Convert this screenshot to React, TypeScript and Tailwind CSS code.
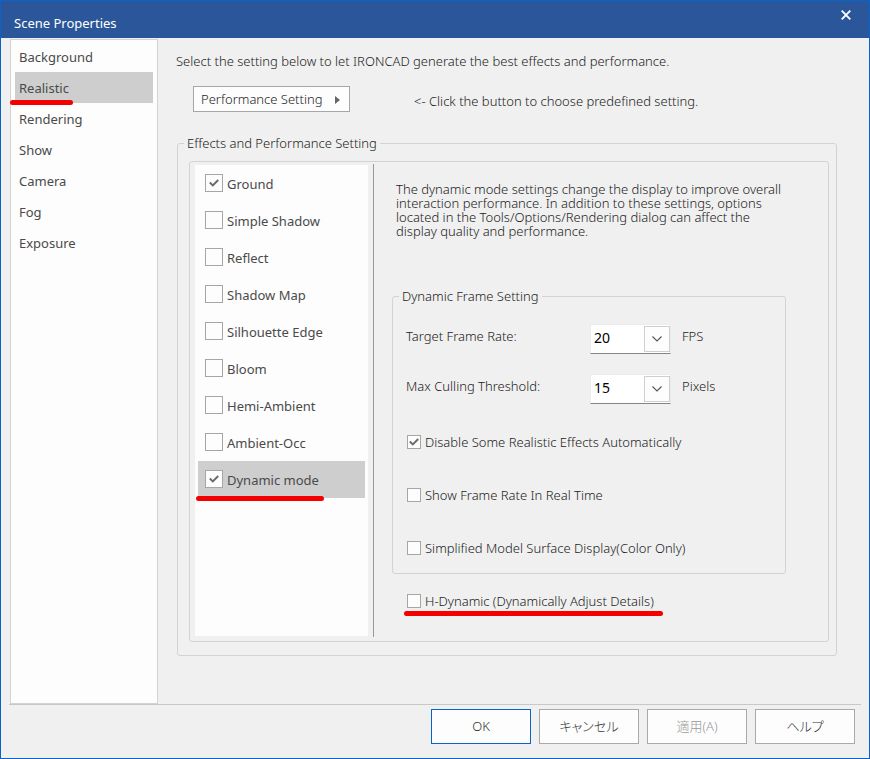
import { useId, useState } from "react";
import type { ReactNode } from "react";

const PAGES = ["Background", "Realistic", "Rendering", "Show", "Camera", "Fog", "Exposure"];

const EFFECTS = [
  { name: "Ground", on: true },
  { name: "Simple Shadow", on: false },
  { name: "Reflect", on: false },
  { name: "Shadow Map", on: false },
  { name: "Silhouette Edge", on: false },
  { name: "Bloom", on: false },
  { name: "Hemi-Ambient", on: false },
  { name: "Ambient-Occ", on: false },
  { name: "Dynamic mode", on: true },
];

function Underline({ className }: { className: string }) {
  return <span aria-hidden="true" className={`pointer-events-none absolute h-[5px] rounded-full bg-[#f50000] ${className}`} />;
}

function Check({ label, initial = false, large = false }: { label: string; initial?: boolean; large?: boolean }) {
  const id = useId();
  const [on, setOn] = useState(initial);
  return (
    <div className={large ? "flex items-center gap-1" : "flex h-5 items-center gap-1"}>
      <span className={`grid shrink-0 place-items-center ${large ? "pb-[2px]" : ""}`}>
        <input
          id={id}
          type="checkbox"
          checked={on}
          onChange={(e) => setOn(e.target.checked)}
          className={`col-start-1 row-start-1 appearance-none border border-[#a6a6a6] bg-[#fdfdfd] ${large ? "size-[18px]" : "size-[14px]"}`}
        />
        {on && (
          <svg viewBox="0 0 10 8" className="pointer-events-none col-start-1 row-start-1 h-2 w-[10px]" fill="none" stroke="#6b6b6b" strokeWidth="2">
            <path d="M0.8 3.6 3.8 6.4 9.2 1" />
          </svg>
        )}
      </span>
      <label htmlFor={id} className="pt-[2px] whitespace-nowrap">
        {label}
      </label>
    </div>
  );
}

function Combo({ label, value, options, unit }: { label: string; value: string; options: string[]; unit: string }) {
  const id = useId();
  return (
    <div className="flex h-[30px] items-center">
      <label htmlFor={id} className="w-[184px] shrink-0 pb-1">
        {label}
      </label>
      <div className="grid w-[81px] shrink-0 items-center">
        <select
          id={id}
          defaultValue={value}
          className="col-start-1 row-start-1 h-[30px] w-full appearance-none border border-[#ececec] border-b-[#858585] bg-white pb-1 pl-[3px] font-[Noto_Sans] text-[14px] font-normal text-black"
        >
          {options.map((o) => (
            <option key={o}>{o}</option>
          ))}
        </select>
        <span className="pointer-events-none col-start-1 row-start-1 mr-px flex h-[26px] w-[26px] items-center justify-center justify-self-end border border-[#cfcfcf] bg-[#fdfdfd]">
          <svg viewBox="0 0 10 6" className="h-[6px] w-[10px]" fill="none" stroke="#555" strokeWidth="1.1">
            <path d="M0.5 0.5 5 5 9.5 0.5" />
          </svg>
        </span>
      </div>
      <span className="pb-1 pl-[11px]">{unit}</span>
    </div>
  );
}

function Group({ title, className, children }: { title: string; className: string; children: ReactNode }) {
  return (
    <fieldset className={`rounded-[3px] border border-[#d3d3d3] ${className}`}>
      <legend className="ml-[6px] h-5 px-[3px] leading-5">{title}</legend>
      {children}
    </fieldset>
  );
}

function DialogButton({ children, primary = false, disabled = false }: { children: ReactNode; primary?: boolean; disabled?: boolean }) {
  const tone = primary
    ? "border-[#0a63c9] text-[#333]"
    : disabled
      ? "border-[#a9a9a9] text-[#999]"
      : "border-[#a9a9a9] text-[#333]";
  return (
    <button
      type="button"
      disabled={disabled}
      className={`h-[35px] w-[100px] border bg-[#fdfdfd] text-[13px] [font-feature-settings:'palt'] ${tone}`}
    >
      {children}
    </button>
  );
}

export default function App() {
  const [page, setPage] = useState("Realistic");
  return (
    <div className="flex min-h-screen w-full flex-col border border-[#0a63c9] bg-[#f0f0f0] font-[Noto_Sans,Noto_Sans_CJK_JP,sans-serif] text-[13px] font-light text-[#1c1c1c]">
      <header className="flex h-[37px] items-start justify-between bg-[#2b579a] pl-[13px] font-normal text-white">
        <h1 className="pt-3 leading-5">Scene Properties</h1>
        <button type="button" aria-label="Close" className="mt-1 mr-[13px] flex size-5 items-center justify-center">
          <svg viewBox="0 0 10 10" className="size-[10px]" fill="none" stroke="#fff" strokeWidth="1.8">
            <path d="M0.7 0.7 9.3 9.3M9.3 0.7 0.7 9.3" />
          </svg>
        </button>
      </header>

      <div className="flex flex-1 pt-px">
        <nav className="ml-[9px] w-[148px] shrink-0 border border-[#d3d3d3] bg-[#fdfdfd] px-1 pt-px font-normal text-[#4a4a4a]">
          <ul>
            {PAGES.map((p) => (
              <li key={p} className="relative">
                <button
                  type="button"
                  onClick={() => setPage(p)}
                  className={`block h-[31px] w-full pt-[2px] pl-1 text-left ${p === page ? "bg-[#cecece]" : ""}`}
                >
                  {p}
                </button>
                {p === "Realistic" && <Underline className="-bottom-[2px] -left-[5px] w-[63px]" />}
              </li>
            ))}
          </ul>
        </nav>

        <main className="flex min-w-0 flex-1 flex-col pt-3 pr-8 pb-12 pl-[19px]">
          <p className="-ml-px leading-5">Select the setting below to let IRONCAD generate the best effects and performance.</p>
          <div className="mt-[15px] flex items-center pl-4">
            <button type="button" className="flex h-[26px] w-[157px] items-center justify-between border border-[#a6a6a6] bg-[#fdfdfd] pt-px pr-[9px] pl-[7px]">
              Performance Setting
              <svg viewBox="0 0 5 8" className="h-2 w-[5px]" fill="#666">
                <path d="M0 0 5 4 0 8z" />
              </svg>
            </button>
            <span className="pt-[5px] pl-16">&lt;- Click the button to choose predefined setting.</span>
          </div>

          <Group title="Effects and Performance Setting" className="mt-[21px] flex flex-1 flex-col pb-[13px]">
            <div className="mt-2 mr-[7px] ml-[11px] flex rounded-[3px] border border-[#d3d3d3] pt-[2px] pb-1 pl-[5px]">
              <ul className="mt-px mb-px w-[173px] shrink-0 bg-[#fdfdfd] px-[3px] font-normal text-[#4a4a4a]">
                {EFFECTS.map((e) => (
                  <li key={e.name} className={`relative flex h-[37px] items-center pl-[7px] ${e.name === "Dynamic mode" ? "bg-[#cecece]" : ""}`}>
                    <Check label={e.name} initial={e.on} large />
                    {e.name === "Dynamic mode" && <Underline className="-bottom-[3px] -left-[2px] w-32" />}
                  </li>
                ))}
              </ul>
              <div className="ml-[5px] w-px shrink-0 bg-[#999]" />
              <div className="min-w-0 flex-1 pt-[18px] pr-[42px] pb-[26px] pl-[18px]">
                <p className="max-w-[400px] pl-1 leading-[14px]">
                  The dynamic mode settings change the display to improve overall
                  <br />
                  interaction performance. In addition to these settings, options
                  <br />
                  located in the Tools/Options/Rendering dialog can affect the
                  <br />
                  display quality and performance.
                </p>
                <Group title="Dynamic Frame Setting" className="mt-12 pb-[15px]">
                  <div className="flex flex-col gap-5 pt-[18px] pl-[13px]">
                    <Combo label="Target Frame Rate:" value="20" options={["10", "15", "20", "25", "30"]} unit="FPS" />
                    <Combo label="Max Culling Threshold:" value="15" options={["5", "10", "15", "20"]} unit="Pixels" />
                  </div>
                  <div className="flex flex-col gap-[33px] pt-[28px] pl-[14px]">
                    <Check label="Disable Some Realistic Effects Automatically" initial />
                    <Check label="Show Frame Rate In Real Time" />
                    <Check label="Simplified Model Surface Display(Color Only)" />
                  </div>
                </Group>
                <div className="relative mt-[17px] pl-[15px]">
                  <Check label="H-Dynamic (Dynamically Adjust Details)" />
                  <Underline className="-bottom-[5px] left-3 w-[259px]" />
                </div>
              </div>
            </div>
          </Group>
        </main>
      </div>

      <footer className="mr-2 ml-2 flex justify-end gap-2 border-t border-[#c8c8c8] pt-1 pr-[6px] pb-[14px]">
        <DialogButton primary>OK</DialogButton>
        <DialogButton>キャンセル</DialogButton>
        <DialogButton disabled>適用(A)</DialogButton>
        <DialogButton>ヘルプ</DialogButton>
      </footer>
    </div>
  );
}
